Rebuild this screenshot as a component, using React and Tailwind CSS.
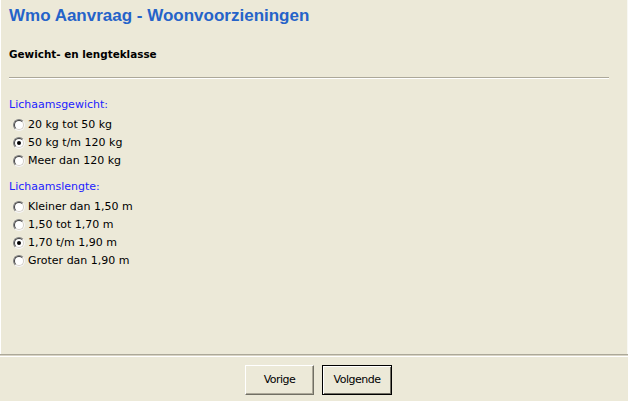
import React, { useState } from 'react';

const Radio = ({ checked, label, onChange }) => (
  <label className="flex items-center h-[18px] cursor-default" onClick={onChange}>
    <span className="relative w-[12px] h-[12px] ml-[4px] mr-[3px] rounded-full border border-t-[#808080] border-l-[#808080] border-r-[#f4f4f4] border-b-[#f4f4f4] bg-white flex items-center justify-center">
      <span className="absolute inset-0 rounded-full border border-t-[#404040] border-l-[#404040] border-r-[#d4d0c8] border-b-[#d4d0c8]" />
      {checked && <span className="w-[4px] h-[4px] rounded-full bg-black" />}
    </span>
    <span>{label}</span>
  </label>
);

const Group = ({ title, options, value, onSelect }) => (
  <div className="mb-[6px]">
    <div className="text-[#2222ff] h-[22px] leading-[22px]">{title}</div>
    {options.map((o, i) => (
      <Radio key={o} label={o} checked={value === i} onChange={() => onSelect(i)} />
    ))}
  </div>
);

export default function App() {
  const [gewicht, setGewicht] = useState(1);
  const [lengte, setLengte] = useState(2);

  return (
    <div className="w-[628px] h-[401px] bg-[#ece9d8] flex flex-col text-black" style={{ fontFamily: '"DejaVu Sans", Verdana, sans-serif' }}>
      <div className="flex-1 border-l border-l-white border-r border-r-[#f8f8f4] pl-[8px] pr-[18px]">
        <h1 className="text-[17px] font-bold text-[#2563c9] pt-[5px] leading-[22px]" style={{ fontFamily: '"Liberation Sans", Arial, sans-serif' }}>
          Wmo Aanvraag - Woonvoorzieningen
        </h1>
        <h2 className="text-[10.4px] font-bold mt-[20px] leading-[14px]">Gewicht- en lengteklasse</h2>
        <div className="mt-[16px] border-t border-t-[#aca899] border-b border-b-white" />
        <div className="mt-[15px] text-[11px]">
          <Group
            title="Lichaamsgewicht:"
            options={['20 kg tot 50 kg', '50 kg t/m 120 kg', 'Meer dan 120 kg']}
            value={gewicht}
            onSelect={setGewicht}
          />
          <Group
            title="Lichaamslengte:"
            options={['Kleiner dan 1,50 m', '1,50 tot 1,70 m', '1,70 t/m 1,90 m', 'Groter dan 1,90 m']}
            value={lengte}
            onSelect={setLengte}
          />
        </div>
      </div>
      <div className="border-t border-t-[#aca899] border-b border-b-white h-[3px] bg-[#d8d4c4]" />
      <div className="h-[44px] flex justify-center items-start pt-[8px] gap-[8px] pl-[9px] text-[11px]" style={{ fontFamily: '"DejaVu Sans", Tahoma, sans-serif' }}>
        <button className="w-[69px] h-[30px] bg-[#ece9d8] border border-t-white border-l-white border-r-[#716f64] border-b-[#716f64] shadow-[inset_-1px_-1px_0_#aca899] tracking-[-0.5px]">
          Vorige
        </button>
        <button className="w-[70px] h-[30px] bg-[#ece9d8] border border-black shadow-[inset_1px_1px_0_#ffffff,inset_-1px_-1px_0_#716f64] tracking-[-0.5px]">
          Volgende
        </button>
      </div>
    </div>
  );
}
